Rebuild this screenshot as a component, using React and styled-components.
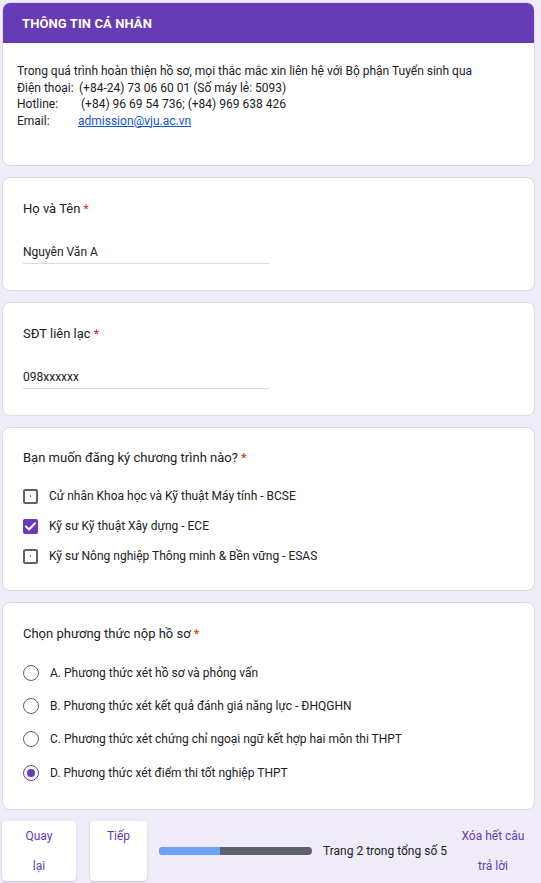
import React from "react";
import styled, { createGlobalStyle } from "styled-components";

const Global = createGlobalStyle`
  html, body { margin: 0; padding: 0; background: #f0ebf8; }
  body { font-family: Roboto, "Noto Sans", Arial, sans-serif; color: #202124; }
  * { box-sizing: border-box; }
`;

const Page = styled.div`
  display: flex;
  flex-direction: column;
  gap: 11px;
  padding: 2px 6px 2px 2px;
  width: 541px;
`;

const Card = styled.section`
  background: #fff;
  border: 1px solid #dadce0;
  border-radius: 8px;
  overflow: hidden;
  padding: ${(p) => p.$pad || "0"};
`;

const Header = styled.div`
  background: #673ab7;
  color: #fff;
  height: 40px;
  display: flex;
  align-items: center;
  padding-left: 19px;
  font-size: 13px;
  font-weight: 700;
  letter-spacing: 0.1px;
`;

const InfoBody = styled.div`
  padding: 20px 14px 36px 14px;
  font-size: 12px;
  line-height: 16.5px;
`;

const InfoLine = styled.div`
  display: flex;
  white-space: nowrap;
`;

const InfoLabel = styled.span`
  width: ${(p) => p.$w}px;
  flex: none;
`;

const Link = styled.a`
  color: #1155cc;
  text-decoration: underline;
`;

const Question = styled.div`
  font-size: 13px;
  line-height: 18px;
  color: #202124;
`;

const Req = styled.span`
  color: #d93025;
  margin-left: 3px;
`;

const Answer = styled.div`
  margin-top: 22px;
  width: 246px;
  height: 24px;
  display: flex;
  align-items: center;
  font-size: 12px;
  border-bottom: 1px solid #dadce0;
`;

const Options = styled.div`
  margin-top: ${(p) => p.$mt}px;
  display: flex;
  flex-direction: column;
`;

const Option = styled.div`
  height: ${(p) => p.$h}px;
  display: flex;
  align-items: center;
  gap: 11px;
  font-size: 12px;
  color: #202124;
`;

const Box = styled.span`
  width: 15px;
  height: 15px;
  flex: none;
  border-radius: 2px;
  border: ${(p) => (p.$checked ? "none" : "2px solid #5f6368")};
  background: ${(p) => (p.$checked ? "#673ab7" : "#fff")};
  display: flex;
  align-items: center;
  justify-content: center;
`;

const Dot = styled.span`
  width: 1.5px;
  height: 1.5px;
  background: #5f6368;
  border-radius: 1px;
`;

const Radio = styled.span`
  width: 16px;
  height: 16px;
  flex: none;
  border-radius: 50%;
  border: 1.5px solid ${(p) => (p.$checked ? "#673ab7" : "#5f6368")};
  display: flex;
  align-items: center;
  justify-content: center;
`;

const RadioDot = styled.span`
  width: 8px;
  height: 8px;
  border-radius: 50%;
  background: #673ab7;
`;

const Footer = styled.div`
  display: flex;
  align-items: center;
  height: 60px;
`;

const NavButton = styled.button`
  align-self: stretch;
  width: ${(p) => p.$w}px;
  margin-right: ${(p) => p.$mr}px;
  background: #fff;
  border: none;
  border-radius: 4px;
  box-shadow: 0 1px 2px rgba(0, 0, 0, 0.18);
  color: #673ab7;
  font-family: Roboto, Arial, sans-serif;
  font-size: 12px;
  line-height: 30px;
  padding: 0;
  display: flex;
  flex-direction: column;
  align-items: center;
  justify-content: flex-start;
`;

const Progress = styled.div`
  width: 153px;
  height: 8px;
  border-radius: 4px;
  background: #5f6368;
  overflow: hidden;
  margin-right: 11px;
`;

const Fill = styled.div`
  height: 100%;
  background: #6ea2f2;
  border-radius: 4px 0 0 4px;
`;

const PageText = styled.div`
  font-size: 12px;
  color: #202124;
  white-space: nowrap;
`;

const Clear = styled.div`
  align-self: stretch;
  width: 80px;
  margin-left: 6px;
  color: #673ab7;
  font-size: 12px;
  line-height: 30px;
  text-align: center;
`;

const CheckIcon = () => (
  <svg width="11" height="9" viewBox="0 0 11 9">
    <path d="M1 4.5 L4 7.5 L10 1.2" fill="none" stroke="#fff" strokeWidth="2" strokeLinecap="round" strokeLinejoin="round" />
  </svg>
);

const programs = [
  { label: "Cử nhân Khoa học và Kỹ thuật Máy tính - BCSE", checked: false },
  { label: "Kỹ sư Kỹ thuật Xây dựng - ECE", checked: true },
  { label: "Kỹ sư Nông nghiệp Thông minh & Bền vững - ESAS", checked: false },
];

const methods = [
  { label: "A. Phương thức xét hồ sơ và phỏng vấn", checked: false },
  { label: "B. Phương thức xét kết quả đánh giá năng lực - ĐHQGHN", checked: false },
  { label: "C. Phương thức xét chứng chỉ ngoại ngữ kết hợp hai môn thi THPT", checked: false },
  { label: "D. Phương thức xét điểm thi tốt nghiệp THPT", checked: true },
];

export default function App() {
  return (
    <>
      <Global />
      <Page>
        <Card>
          <Header>THÔNG TIN CÁ NHÂN</Header>
          <InfoBody>
            <InfoLine>Trong quá trình hoàn thiện hồ sơ, mọi thắc mắc xin liên hệ với Bộ phận Tuyển sinh qua</InfoLine>
            <InfoLine>
              <InfoLabel $w={62}>Điện thoại:</InfoLabel>(+84-24) 73 06 60 01 (Số máy lẻ: 5093)
            </InfoLine>
            <InfoLine>
              <InfoLabel $w={64}>Hotline:</InfoLabel>(+84) 96 69 54 736; (+84) 969 638 426
            </InfoLine>
            <InfoLine>
              <InfoLabel $w={61}>Email:</InfoLabel>
              <Link href="#">admission@vju.ac.vn</Link>
            </InfoLine>
          </InfoBody>
        </Card>

        <Card $pad="22px 20px 26px 20px">
          <Question>
            Họ và Tên<Req>*</Req>
          </Question>
          <Answer>Nguyên Văn A</Answer>
        </Card>

        <Card $pad="22px 20px 26px 20px">
          <Question>
            SĐT liên lạc<Req>*</Req>
          </Question>
          <Answer>098xxxxxx</Answer>
        </Card>

        <Card $pad="21px 20px 19px 20px">
          <Question>
            Bạn muốn đăng ký chương trình nào?<Req>*</Req>
          </Question>
          <Options $mt={14}>
            {programs.map((o) => (
              <Option key={o.label} $h={30}>
                <Box $checked={o.checked}>{o.checked ? <CheckIcon /> : <Dot />}</Box>
                {o.label}
              </Option>
            ))}
          </Options>
        </Card>

        <Card $pad="22px 20px 20px 20px">
          <Question>
            Chọn phương thức nộp hồ sơ<Req>*</Req>
          </Question>
          <Options $mt={13}>
            {methods.map((o) => (
              <Option key={o.label} $h={33.3}>
                <Radio $checked={o.checked}>{o.checked && <RadioDot />}</Radio>
                {o.label}
              </Option>
            ))}
          </Options>
        </Card>

        <Footer>
          <NavButton $w={74} $mr={14}>
            <span>Quay</span>
            <span>lại</span>
          </NavButton>
          <NavButton $w={57} $mr={12}>
            <span>Tiếp</span>
          </NavButton>
          <Progress>
            <Fill style={{ width: `${(2 / 5) * 100}%` }} />
          </Progress>
          <PageText>Trang 2 trong tổng số 5</PageText>
          <Clear>
            Xóa hết câu
            <br />
            trả lời
          </Clear>
        </Footer>
      </Page>
    </>
  );
}
